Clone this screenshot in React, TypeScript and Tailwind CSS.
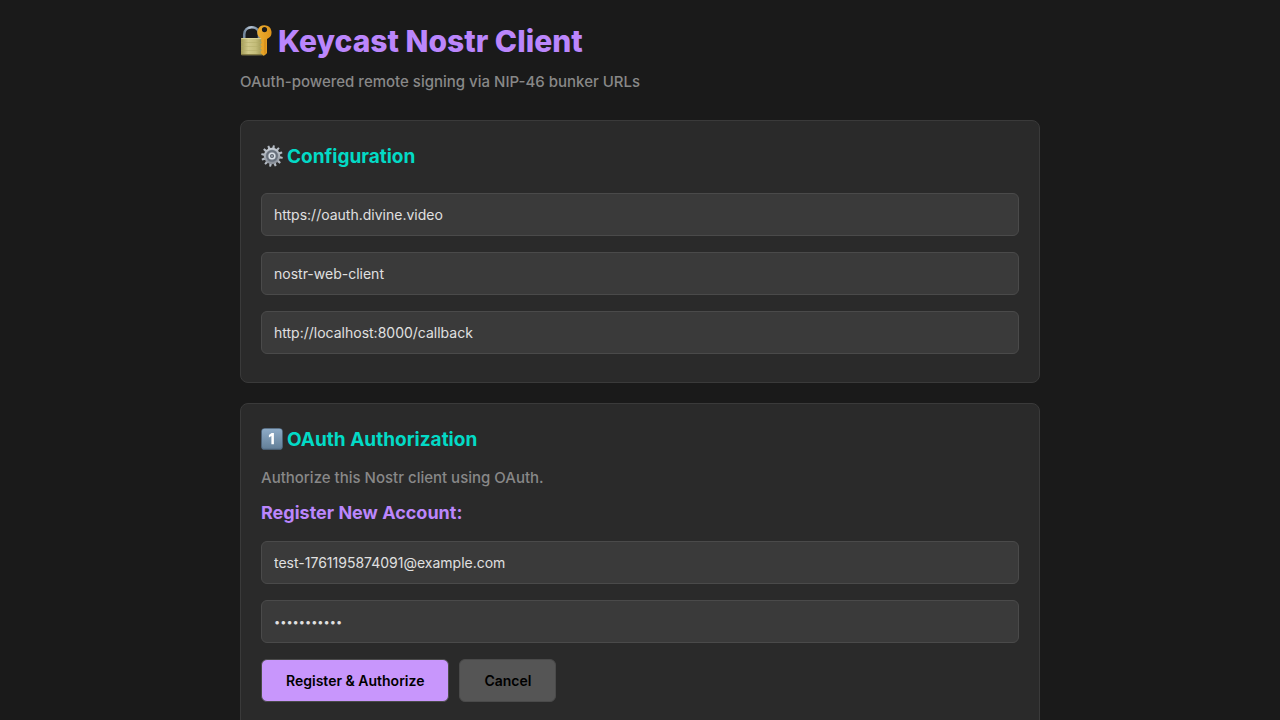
import type { InputHTMLAttributes, ReactNode } from "react";

function LockKeyIcon() {
  return (
    <svg viewBox="0 0 32 32" className="size-8 shrink-0" aria-hidden="true">
      <defs>
        <linearGradient id="lock-body" x1="0" y1="0" x2="1" y2="0">
          <stop offset="0" stopColor="#a39c58" />
          <stop offset="0.3" stopColor="#d0c98a" />
          <stop offset="0.6" stopColor="#c3bc79" />
          <stop offset="1" stopColor="#8c8442" />
        </linearGradient>
        <linearGradient id="lock-shackle" x1="0" y1="0" x2="1" y2="0">
          <stop offset="0" stopColor="#71859a" />
          <stop offset="0.4" stopColor="#bccbdc" />
          <stop offset="1" stopColor="#6c7f93" />
        </linearGradient>
        <linearGradient id="lock-key" x1="0" y1="0" x2="1" y2="0">
          <stop offset="0" stopColor="#eeae30" />
          <stop offset="1" stopColor="#dd941a" />
        </linearGradient>
      </defs>
      <path d="M4.2 14V9.5C4.2 4.9 7.5 2.2 11.7 2.2S19 4.9 19 9.5V14" fill="none" stroke="url(#lock-shackle)" strokeWidth="2.5" />
      <rect x="1" y="13" width="24.5" height="17.2" rx="1" fill="url(#lock-body)" />
      <path d="M1.2 17.5h24M1.2 21.5h24M1.2 25.5h24" stroke="#b3ac69" strokeWidth="0.5" />
      <path d="M1.2 13.6h24" stroke="#e2dca0" strokeWidth="0.8" />
      <path d="M1.2 29.6h24" stroke="#79713a" strokeWidth="0.9" />
      <path
        fillRule="evenodd"
        d="M24.5 0.2a7.1 7.1 0 0 0-3.3 13.4v3.2l.9 1-1.4 1.2v1.5l1.4 1-1.4 1.1v1.5l1.4 1-1.4 1.1v1.8l2.9 2.7 3.4-2.4V13.9A7.1 7.1 0 0 0 24.5.2Zm0 1.8a2.6 2.6 0 1 1 0 5.2 2.6 2.6 0 0 1 0-5.2Z"
        fill="url(#lock-key)"
      />
      <path d="M25 14.5v14" stroke="#c17d14" strokeWidth="0.7" />
    </svg>
  );
}

function GearIcon() {
  const teeth = Array.from({ length: 12 }, (_, i) => i * 30 + 10);
  return (
    <svg viewBox="0 0 22 22" className="mt-1 size-[22px] shrink-0" aria-hidden="true">
      <defs>
        <linearGradient id="gear-metal" x1="0" y1="0" x2="0" y2="1">
          <stop offset="0" stopColor="#c4cad2" />
          <stop offset="1" stopColor="#8b919a" />
        </linearGradient>
      </defs>
      {teeth.map((angle) => (
        <path key={angle} d="M9.7 3.6 10.1.2h1.8l.4 3.4Z" fill="#b3bac3" transform={`rotate(${angle} 11 11)`} />
      ))}
      <circle cx="11" cy="11" r="7.2" fill="#7b838e" stroke="url(#gear-metal)" strokeWidth="2" />
      <circle cx="11" cy="11" r="5" fill="none" stroke="#666e79" strokeWidth="1.2" />
      <circle cx="11" cy="11" r="2.8" fill="#5b636e" stroke="#d9dfe6" strokeWidth="1.5" />
      <circle cx="11" cy="11" r="0.9" fill="#a5acb5" />
    </svg>
  );
}

function KeycapOneIcon() {
  return (
    <svg viewBox="0 0 22 22" className="mt-1 size-[22px] shrink-0" role="img" aria-label="Step 1">
      <defs>
        <linearGradient id="keycap-face" x1="0" y1="0" x2="0" y2="1">
          <stop offset="0" stopColor="#8eabc7" />
          <stop offset="1" stopColor="#648099" />
        </linearGradient>
      </defs>
      <rect x="0.2" y="0.2" width="21.6" height="21.6" rx="3.4" fill="#56708a" />
      <rect x="1" y="0.8" width="20" height="19.8" rx="2.8" fill="url(#keycap-face)" />
      <path d="M10.6 5h2.3v11.2h-2.5V8L7.9 9.4V7Z" fill="#fff" />
    </svg>
  );
}

function Field({ label, ...props }: InputHTMLAttributes<HTMLInputElement> & { label: string }) {
  return (
    <input
      aria-label={label}
      className={
        "block h-[43px] w-full rounded-md border border-[#4a4a4a] bg-[#3a3a3a] px-3 text-[#e0e0e0] outline-none focus:border-[#bb86fc] " +
        (props.type === "password" ? "text-[11px]" : "text-sm")
      }
      {...props}
    />
  );
}

function Card({ icon, title, children }: { icon: ReactNode; title: string; children: ReactNode }) {
  return (
    <section className="rounded-lg border border-[#3a3a3a] bg-[#2a2a2a] px-5 pt-5 pb-7">
      <h2 className="flex items-start gap-1 text-[19px] leading-[31px] font-bold text-[#03dac6]">
        {icon}
        {title}
      </h2>
      {children}
    </section>
  );
}

export default function App() {
  return (
    <div className="min-h-screen bg-[#1a1a1a] px-5 py-5 font-['Inter','Liberation_Sans',sans-serif] text-base text-[#e0e0e0]">
      <main className="mx-auto flex max-w-[800px] flex-col gap-5">
        <header className="pb-[6px]">
          <h1 className="flex items-center gap-[6px] text-[30px] leading-[42px] font-extrabold text-[#bb86fc]">
            <LockKeyIcon />
            Keycast Nostr Client
          </h1>
          <p className="mt-2 text-[15px] leading-6 font-medium text-[#888888]">OAuth-powered remote signing via NIP-46 bunker URLs</p>
        </header>

        <Card icon={<GearIcon />} title="Configuration">
          <div className="mt-[21px] flex flex-col gap-4">
            <Field label="Server URL" type="text" defaultValue="https://oauth.divine.video" />
            <Field label="Client ID" type="text" defaultValue="nostr-web-client" />
            <Field label="Redirect URI" type="text" defaultValue="http://localhost:8000/callback" />
          </div>
        </Card>

        <Card icon={<KeycapOneIcon />} title="OAuth Authorization">
          <p className="mt-[11px] text-[15px] leading-6 font-medium text-[#888888]">Authorize this Nostr client using OAuth.</p>
          <h3 className="mt-2 text-lg leading-[30px] font-bold text-[#bb86fc]">Register New Account:</h3>
          <form className="mt-[13px] flex flex-col gap-4" onSubmit={(event) => event.preventDefault()}>
            <Field label="Email" type="email" defaultValue="test-1761195874091@example.com" />
            <Field label="Password" type="password" defaultValue="password123" />
            <div className="flex gap-[10px]">
              <button type="submit" className="h-[43px] rounded-md border border-[#4a4a4a] bg-[#c896fc] px-6 text-sm font-semibold text-black">
                Register &amp; Authorize
              </button>
              <button type="button" className="h-[43px] rounded-md border border-[#4a4a4a] bg-[#555555] px-6 text-sm font-semibold text-black">
                Cancel
              </button>
            </div>
          </form>
        </Card>
      </main>
    </div>
  );
}
